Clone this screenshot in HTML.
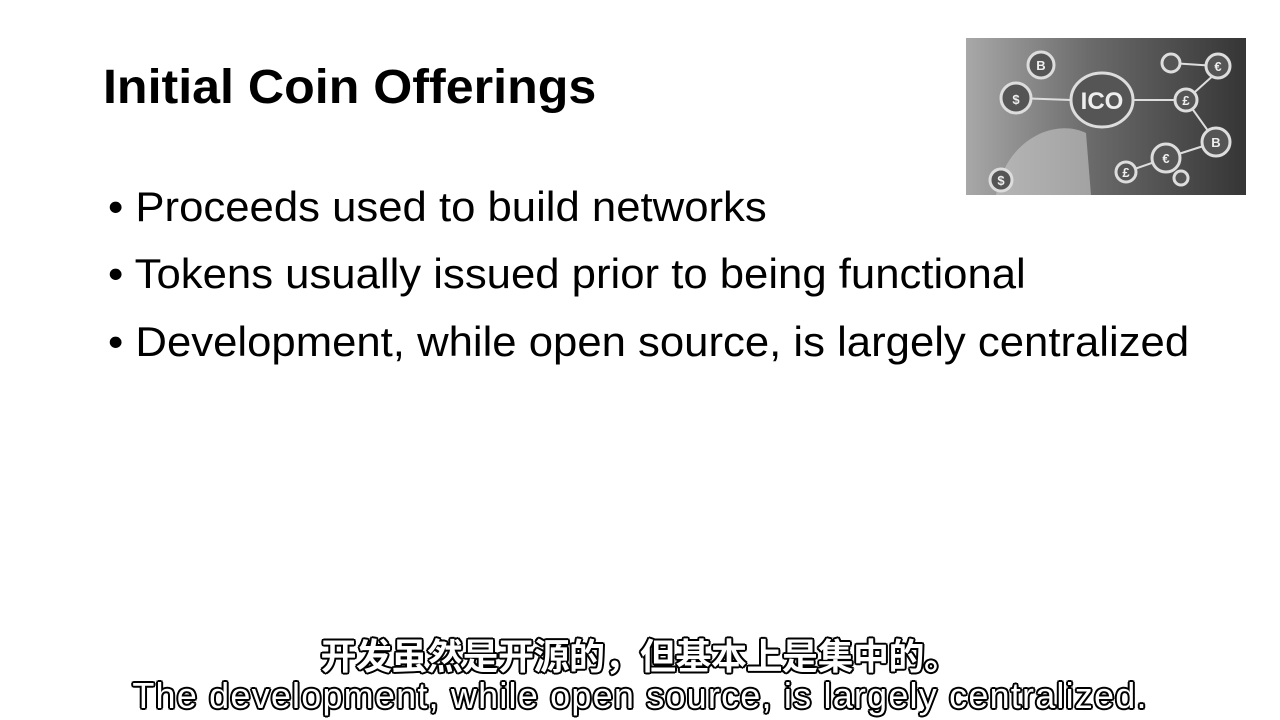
<!DOCTYPE html>
<html><head><meta charset="utf-8"><style>
body{margin:0;width:1280px;height:720px;background:#fff;position:relative;overflow:hidden;font-family:"Liberation Sans",sans-serif;}
.t{position:absolute;white-space:nowrap;transform-origin:0 0;}
.title{left:103px;top:60px;font-size:48px;font-weight:bold;color:#000;transform:scaleX(1.045);}
.b{left:108px;font-size:42px;color:#000;transform:scaleX(1.04);}
.sub{position:absolute;left:0;width:1280px;text-align:center;color:#fff;text-shadow:-2px 0 #000,2px 0 #000,0 -2px #000,0 2px #000,-1.5px -1.5px #000,1.5px 1.5px #000,-1.5px 1.5px #000,1.5px -1.5px #000;}
</style></head><body>
<div class="t title">Initial Coin Offerings</div>
<div class="t b" style="top:183px">• Proceeds used to build networks</div>
<div class="t b" style="top:250px">• Tokens usually issued prior to being functional</div>
<div class="t b" style="top:318px">• Development, while open source, is largely centralized</div>
<svg style="position:absolute;left:966px;top:38px" width="280" height="157" viewBox="0 0 280 157">
<defs><linearGradient id="g" x1="0" x2="1"><stop offset="0" stop-color="#a8a8a8"/><stop offset="0.45" stop-color="#6a6a6a"/><stop offset="1" stop-color="#353535"/></linearGradient></defs>
<rect width="280" height="157" fill="url(#g)"/>
<path d="M30 157 C40 100 90 80 120 95 L125 157Z" fill="#c8c8c8" opacity=".6"/>
<g stroke="#ddd" stroke-width="2" fill="none">
<line x1="50" y1="60" x2="105" y2="62"/><line x1="163" y1="62" x2="220" y2="62"/><line x1="205" y1="25" x2="250" y2="28"/>
<line x1="220" y1="62" x2="250" y2="35"/><line x1="220" y1="62" x2="250" y2="104"/><line x1="200" y1="120" x2="250" y2="104"/><line x1="160" y1="134" x2="200" y2="120"/>
</g>
<g stroke="#ddd" stroke-width="3" fill="#555">
<ellipse cx="136" cy="62" rx="31" ry="27"/><circle cx="50" cy="60" r="15"/><circle cx="75" cy="27" r="13"/><circle cx="205" cy="25" r="9"/><circle cx="252" cy="28" r="12"/><circle cx="220" cy="62" r="11"/><circle cx="250" cy="104" r="14"/><circle cx="200" cy="120" r="14"/><circle cx="160" cy="134" r="10"/><circle cx="215" cy="140" r="7"/><circle cx="35" cy="142" r="11"/>
</g>
<text x="136" y="71" font-size="24" font-weight="bold" fill="#eee" text-anchor="middle" font-family="Liberation Sans">ICO</text>
<g font-size="13" font-weight="bold" fill="#eee" text-anchor="middle" font-family="Liberation Sans">
<text x="50" y="66">$</text><text x="75" y="32">B</text><text x="252" y="33">€</text><text x="220" y="67">£</text><text x="250" y="109">B</text><text x="200" y="125">€</text><text x="160" y="139">£</text><text x="35" y="147">$</text></g>
</svg>
<div class="sub" style="top:628px;font-size:36px;font-family:'Noto Sans CJK SC',sans-serif;font-weight:bold;letter-spacing:-0.5px;">开发虽然是开源的，但基本上是集中的。</div>
<div class="sub" style="top:675px;font-size:36px;letter-spacing:1.2px;">The development, while open source, is largely centralized.</div>
</body></html>
